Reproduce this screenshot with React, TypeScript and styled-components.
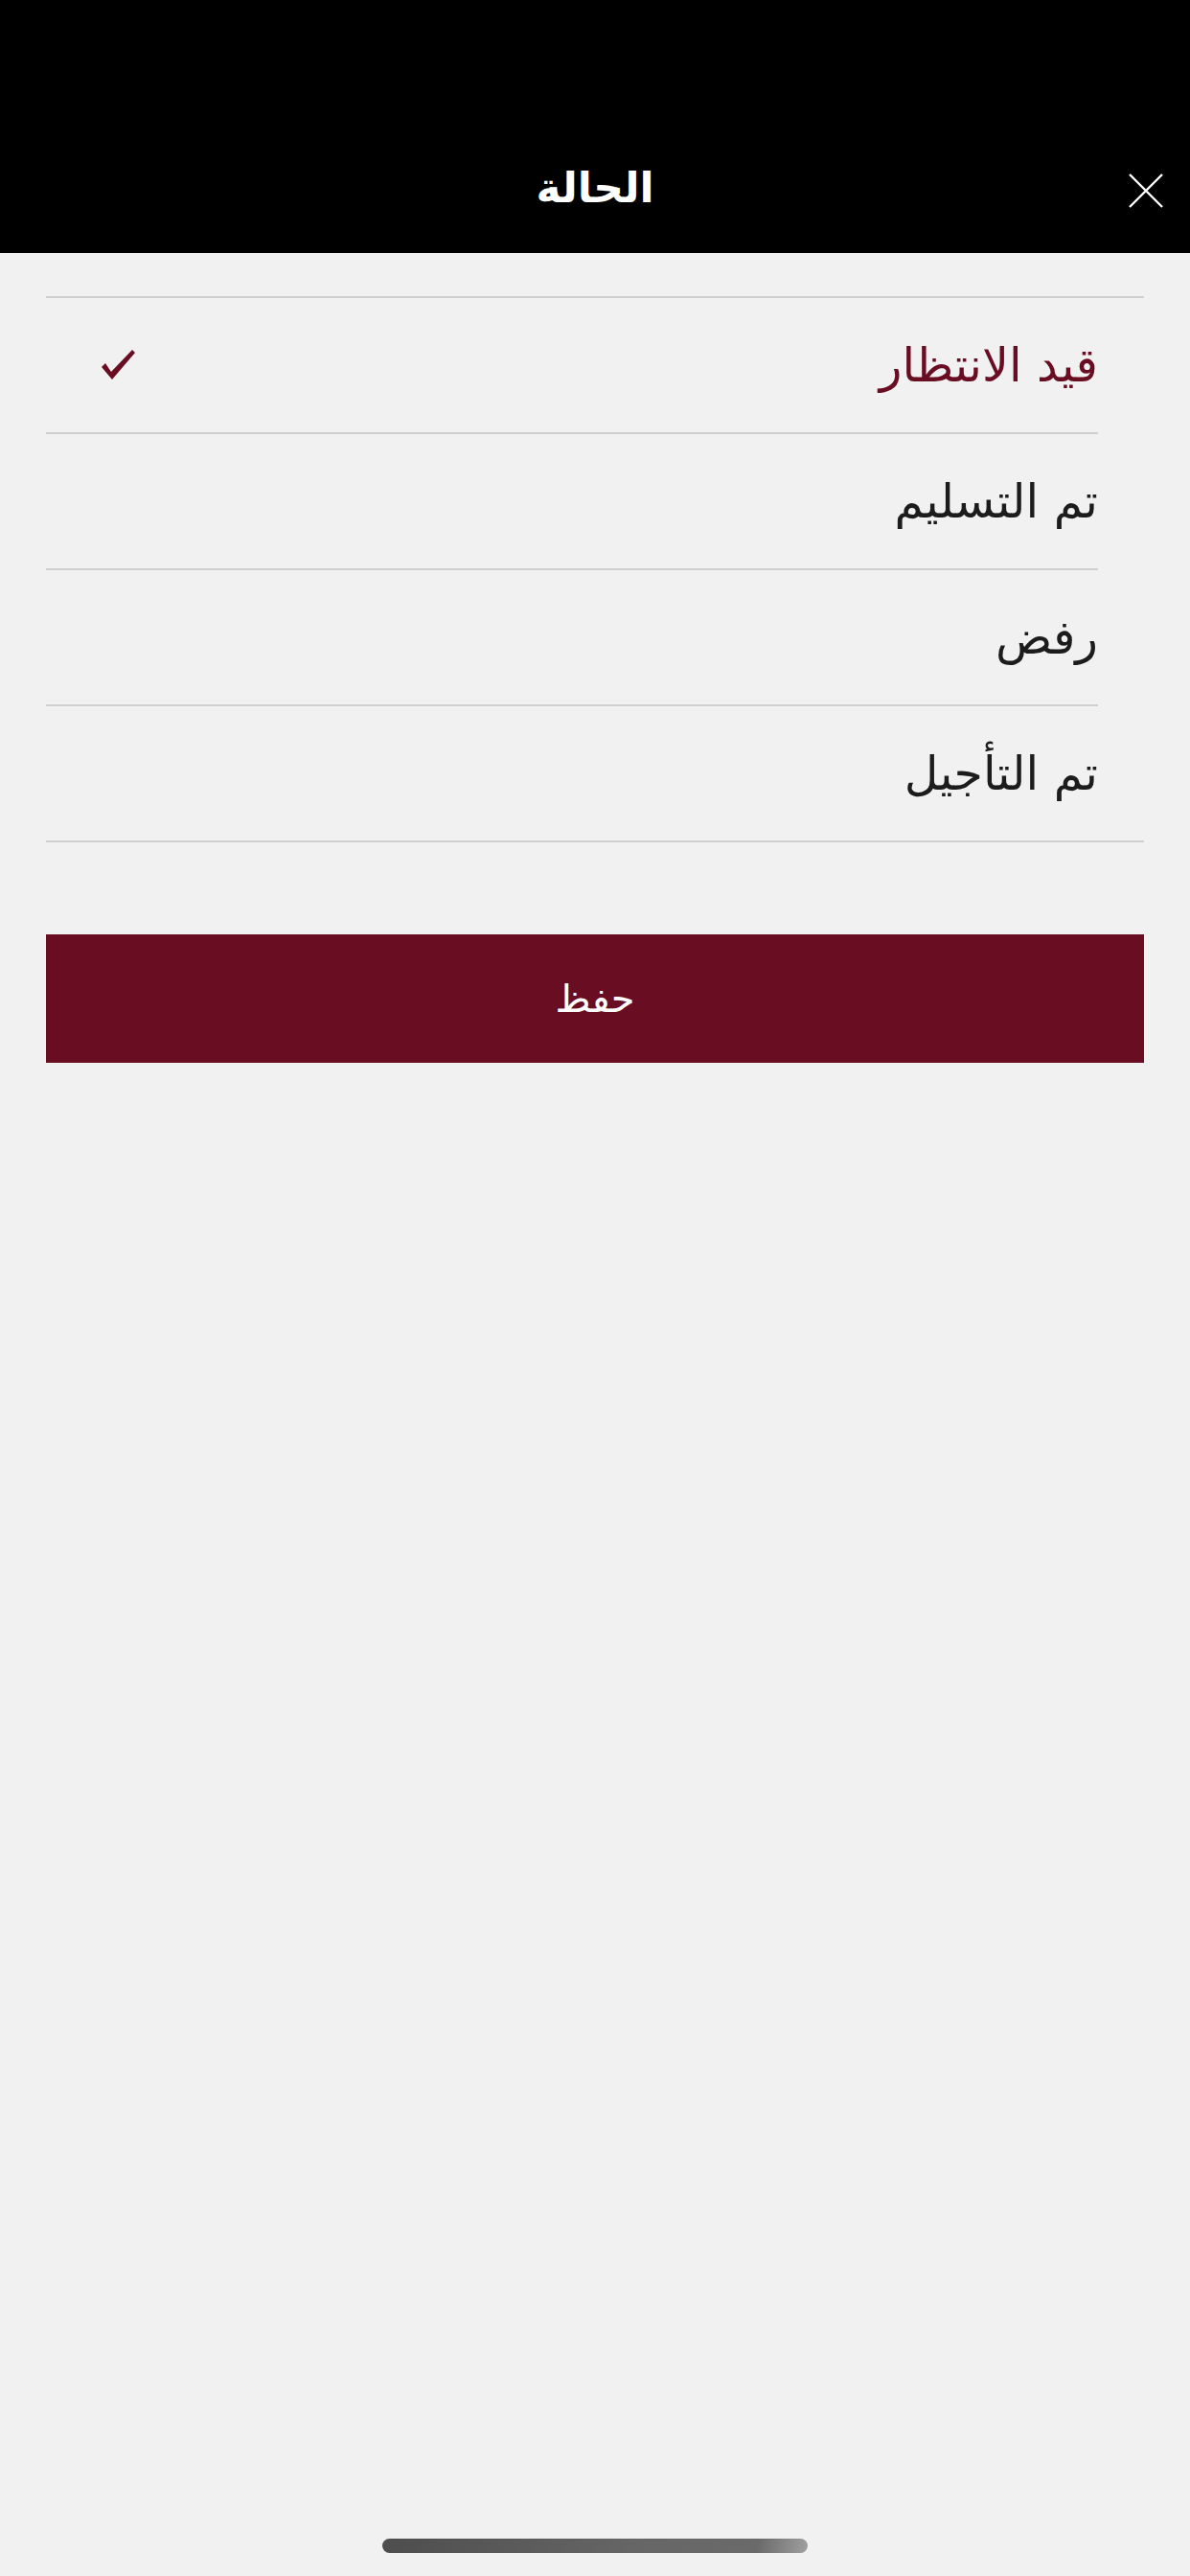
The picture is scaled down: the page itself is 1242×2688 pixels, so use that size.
import React, { useState } from "react";
import styled, { createGlobalStyle } from "styled-components";

const GlobalStyle = createGlobalStyle`
  html, body {
    margin: 0;
    padding: 0;
    background: #f1f1f1;
  }
  body {
    font-family: "DejaVu Sans", "Noto Sans", sans-serif;
  }
`;

const statuses = ["قيد الانتظار", "تم التسليم", "رفض", "تم التأجيل"];

const App: React.FC<{}> = () => {
  const [selected, setSelected] = useState(0);
  return (
    <Page dir="rtl">
      <GlobalStyle />
      <Header>
        <Title>الحالة</Title>
        <CloseButton aria-label="close">
          <svg width="38" height="36" viewBox="0 0 38 36">
            <path d="M2 1 L36 35 M36 1 L2 35" stroke="#fff" strokeWidth="2.4" fill="none" />
          </svg>
        </CloseButton>
      </Header>
      <Content>
        <List>
          {statuses.map((s, i) => (
            <Row key={s} last={i === statuses.length - 1} onClick={() => setSelected(i)}>
              <Label active={i === selected}>{s}</Label>
              {i === selected && (
                <Check>
                  <svg width="40" height="34" viewBox="0 0 40 34">
                    <path d="M2 19 L6 15 L12 24 L34 1 L37 4 L13 32 Z" fill="#690d23" />
                  </svg>
                </Check>
              )}
            </Row>
          ))}
        </List>
        <SaveButton>حفظ</SaveButton>
      </Content>
      <HomeIndicator />
    </Page>
  );
};

export default App;

const Page = styled.div`
  min-height: 100vh;
  display: flex;
  flex-direction: column;
  background: #f1f1f1;
`;

const Header = styled.div`
  position: relative;
  height: 264px;
  background: #000;
  display: flex;
  align-items: center;
  justify-content: center;
  padding-top: 128px;
  box-sizing: border-box;
`;

const Title = styled.h1`
  margin: 0;
  color: #fff;
  font-size: 44px;
  font-weight: 700;
  line-height: 1;
`;

const CloseButton = styled.button`
  position: absolute;
  right: 27px;
  top: 181px;
  background: none;
  border: none;
  padding: 0;
  display: flex;
`;

const Content = styled.div`
  padding: 45px 48px 0;
`;

const List = styled.div`
  border-top: 2px solid #cfcfcf;
  border-bottom: 2px solid #cfcfcf;
`;

const Row = styled.div<{ last: boolean }>`
  margin-right: 48px;
  display: flex;
  align-items: center;
  justify-content: space-between;
  border-bottom: ${p => (p.last ? "none" : "2px solid #cfcfcf")};
  box-sizing: border-box;
  height: ${p => (p.last ? "140px" : "142px")};
  cursor: pointer;
`;

const Label = styled.span<{ active: boolean }>`
  font-size: 49px;
  color: ${p => (p.active ? "#690d23" : "#1c1c1c")};
`;

const Check = styled.span`
  display: flex;
  margin-left: 56px;
`;

const SaveButton = styled.button`
  display: block;
  width: 100%;
  height: 134px;
  margin-top: 96px;
  border: none;
  background: #690d23;
  color: #fff;
  font-family: "DejaVu Sans", sans-serif;
  font-size: 40px;
`;

const HomeIndicator = styled.div`
  margin: auto auto 24px;
  width: 444px;
  height: 15px;
  border-radius: 8px;
  background: linear-gradient(100deg, #4d4d4d 0%, #666 60%, #6a6a6a 88%, #a0a0a0 100%);
`;
